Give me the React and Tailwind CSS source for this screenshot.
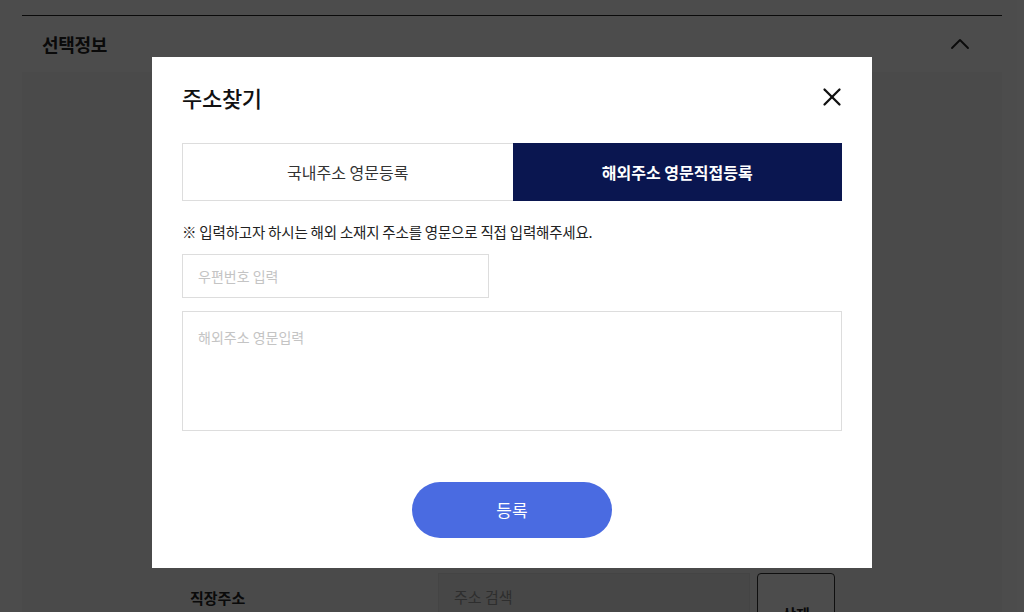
import { X, ChevronUp } from "lucide-react";

const font = { fontFamily: '"Noto Sans CJK KR", "Noto Sans", sans-serif' };

export default function App() {
  return (
    <div className="relative w-[1024px] h-[612px] overflow-hidden bg-white text-[#222]" style={font}>
      {/* Background page */}
      <div className="px-[22px] pt-[15px]">
        <div className="border-t border-[#222]" />
        <div className="flex items-center justify-between h-[56px] pl-[20px] pr-[26px]">
          <h2 className="text-[18px] font-bold tracking-[-0.3px]">선택정보</h2>
          <ChevronUp size={32} strokeWidth={1.4} className="text-[#222]" />
        </div>
        <div className="bg-[#f7f7f7] h-[600px] pt-[501px]">
          <div className="flex items-start">
            <div className="w-[416px] pl-[168px] pt-[14px] text-[15px] font-semibold">직장주소</div>
            <div className="w-[312px] h-[50px] bg-[#eeeeee] border border-[#e4e4e4] px-[15px] pt-[12px] text-[15px] text-[#999]">
              주소 검색
            </div>
            <button className="ml-[7px] w-[78px] h-[60px] border border-[#333] rounded-[4px] bg-white text-[15px] font-semibold pt-[22px]">
              삭제
            </button>
          </div>
        </div>
      </div>

      {/* Overlay */}
      <div className="absolute inset-0 bg-black/70 flex justify-center pt-[57px]">
        <div className="w-[720px] h-[511px] bg-white px-[30px] pt-[23px]">
          <div className="flex items-center justify-between h-[34px]">
            <h3 className="text-[22px] font-medium text-[#111] tracking-[-0.3px]">주소찾기</h3>
            <X size={30} strokeWidth={1.8} className="text-[#111] -mr-[5px]" />
          </div>

          <div className="mt-[29px] flex h-[58px]">
            <button className="flex-1 border border-[#dddddd] border-r-0 text-[16px] text-[#333]">
              국내주소 영문등록
            </button>
            <button className="flex-1 bg-[#0a1650] text-[16px] font-semibold text-white">
              해외주소 영문직접등록
            </button>
          </div>

          <p className="mt-[21px] text-[14.5px] text-[#222] leading-[20px] tracking-[-0.2px]">
            ※ 입력하고자 하시는 해외 소재지 주소를 영문으로 직접 입력해주세요.
          </p>

          <input
            className="mt-[12px] block w-[307px] h-[44px] border border-[#dddddd] px-[15px] text-[14px] outline-none placeholder:text-[#c4c4c4]"
            placeholder="우편번호 입력"
          />

          <textarea
            className="mt-[13px] block w-full h-[120px] border border-[#dddddd] px-[15px] pt-[15px] text-[14px] outline-none resize-none placeholder:text-[#c4c4c4]"
            placeholder="해외주소 영문입력"
          />

          <div className="mt-[51px] flex justify-center">
            <button className="w-[200px] h-[56px] rounded-full bg-[#4a6be1] text-white text-[17px]">
              등록
            </button>
          </div>
        </div>
      </div>
    </div>
  );
}
